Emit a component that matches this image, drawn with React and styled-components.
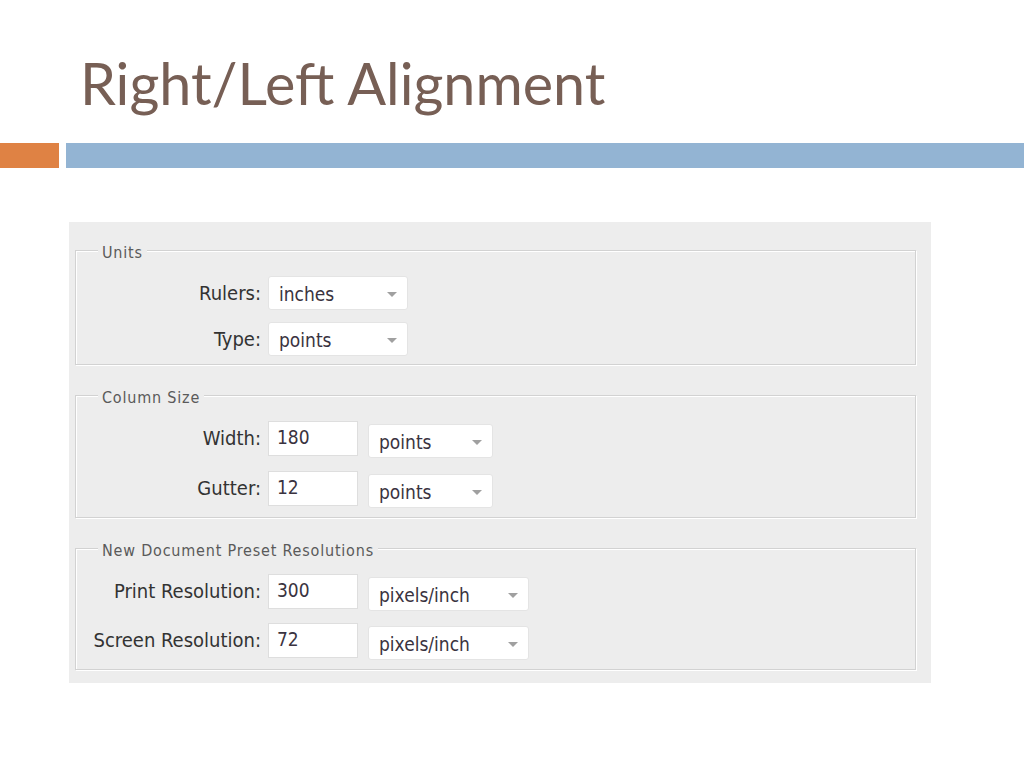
import React from 'react'
import styled, { createGlobalStyle } from 'styled-components'

const Global = createGlobalStyle`
  body {
    margin: 0;
    background: #ffffff;
  }
`

const Slide = styled.div`
  width: 1024px;
  height: 768px;
  overflow: hidden;
  background: #ffffff;
`

const Title = styled.h1`
  margin: 0;
  padding: 44px 0 0 80px;
  height: 99px;
  box-sizing: border-box;
  font-family: Lato, "Open Sans", sans-serif;
  font-weight: 400;
  font-size: 57.5px;
  line-height: 78px;
  color: #775f55;
`

const Bars = styled.div`
  display: flex;
  gap: 7px;
  height: 25px;
  margin-top: 44px;
`

const Accent = styled.div`
  width: 59px;
  background: #df8244;
`

const Band = styled.div`
  flex: 1;
  background: #93b4d3;
`

const Panel = styled.div`
  margin: 54px 0 0 69px;
  width: 862px;
  height: 461px;
  box-sizing: border-box;
  background: #ededed;
  padding: 16px 15px 0 6px;
  display: flex;
  flex-direction: column;
  gap: 18px;
  font-family: "DejaVu Sans Condensed", "DejaVu Sans", sans-serif;
`

const Group = styled.fieldset`
  margin: 0;
  padding: 14px 0 0 0;
  min-inline-size: 0;
  height: ${p => p.$height}px;
  box-sizing: border-box;
  border: 1px solid #d2d2d2;
  box-shadow: inset 1px 1px 0 #ffffff, 1px 1px 0 #ffffff;
  display: flex;
  flex-direction: column;
  gap: ${p => p.$gap}px;
`

const Legend = styled.legend`
  margin-left: 22px;
  padding: 6px 4px 0 4px;
  background: #ededed;
  font-size: 16px;
  letter-spacing: 0.8px;
  line-height: 18px;
  color: #5a5a5a;
`

const Row = styled.div`
  display: grid;
  grid-template-columns: 185px auto auto;
  column-gap: 7px;
  align-items: start;
  justify-content: start;
`

const Label = styled.span`
  align-self: center;
  text-align: right;
  font-size: 20px;
  color: #333333;
  padding-bottom: ${p => (p.$raised ? 3 : 0)}px;
`

const Input = styled.div`
  width: 90px;
  height: 35px;
  box-sizing: border-box;
  background: #ffffff;
  border: 1px solid #dedede;
  padding: 0 0 3px 8px;
  display: flex;
  align-items: center;
  font-size: 19px;
  line-height: 1;
  color: #3a3340;
`

const Select = styled.div`
  width: ${p => p.$width}px;
  height: 34px;
  box-sizing: border-box;
  margin: ${p => (p.$offset ? '3px 0 0 3px' : '0')};
  background: #ffffff;
  border: 1px solid #e4e4e4;
  border-radius: 3px;
  padding: 2px 10px 0 10px;
  display: flex;
  align-items: center;
  justify-content: space-between;
  font-size: 19px;
  color: #3a3340;
`

const Arrow = styled.span`
  width: 0;
  height: 0;
  border-left: 5px solid transparent;
  border-right: 5px solid transparent;
  border-top: 5px solid #a0a0a0;
`

const Dropdown = ({ width, offset, children }) => (
  <Select $width={width} $offset={offset}>
    <span>{children}</span>
    <Arrow />
  </Select>
)

export default function App () {
  return (
    <Slide>
      <Global />
      <Title>Right/Left Alignment</Title>
      <Bars>
        <Accent />
        <Band />
      </Bars>
      <Panel>
        <Group $height={127} $gap={12}>
          <Legend>Units</Legend>
          <Row>
            <Label>Rulers:</Label>
            <Dropdown width={140}>inches</Dropdown>
          </Row>
          <Row>
            <Label>Type:</Label>
            <Dropdown width={140}>points</Dropdown>
          </Row>
        </Group>
        <Group $height={135} $gap={13}>
          <Legend>Column Size</Legend>
          <Row>
            <Label $raised>Width:</Label>
            <Input>180</Input>
            <Dropdown width={125} offset>points</Dropdown>
          </Row>
          <Row>
            <Label $raised>Gutter:</Label>
            <Input>12</Input>
            <Dropdown width={125} offset>points</Dropdown>
          </Row>
        </Group>
        <Group $height={134} $gap={12}>
          <Legend>New Document Preset Resolutions</Legend>
          <Row>
            <Label $raised>Print Resolution:</Label>
            <Input>300</Input>
            <Dropdown width={161} offset>pixels/inch</Dropdown>
          </Row>
          <Row>
            <Label $raised>Screen Resolution:</Label>
            <Input>72</Input>
            <Dropdown width={161} offset>pixels/inch</Dropdown>
          </Row>
        </Group>
      </Panel>
    </Slide>
  )
}
